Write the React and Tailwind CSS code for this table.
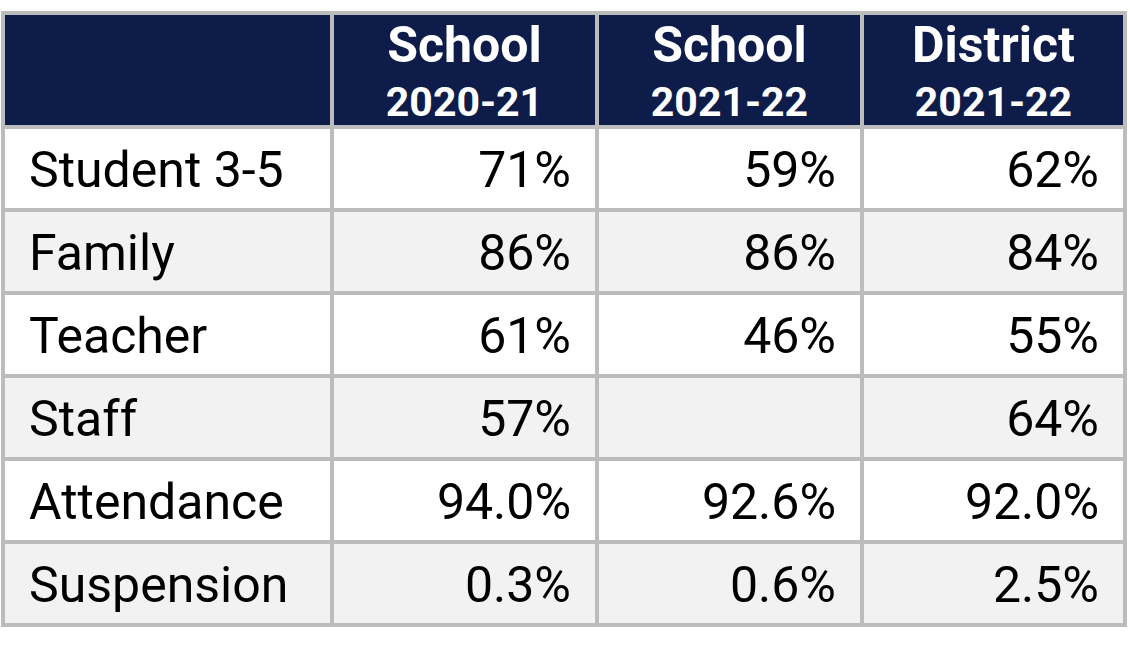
import React from "react";

const rows = [
  ["Student 3-5", "71%", "59%", "62%"],
  ["Family", "86%", "86%", "84%"],
  ["Teacher", "61%", "46%", "55%"],
  ["Staff", "57%", "", "64%"],
  ["Attendance", "94.0%", "92.6%", "92.0%"],
  ["Suspension", "0.3%", "0.6%", "2.5%"],
];

const heads = [
  ["School", "2020-21"],
  ["School", "2021-22"],
  ["District", "2021-22"],
];

export default function App() {
  return (
    <div className="w-[1130px] h-[645px] bg-white pt-[11px] pl-[1px]" style={{ fontFamily: "Roboto, 'Liberation Sans', sans-serif" }}>
      <div className="inline-grid grid-cols-[325px_261px_261px_259px] grid-rows-[110px_79px_79px_79px_79px_79px_79px] gap-[4px] p-[4px] bg-[#bcbcbc]">
        <div className="bg-[#0e1c4a]" />
        {heads.map(([a, b], i) => (
          <div key={i} className="bg-[#0e1c4a] text-white font-bold flex flex-col items-center justify-center pt-[6px]">
            <div className="text-[50px] leading-[54px]">{a}</div>
            <div className="text-[41px] leading-[52px] mt-[4px]">{b}</div>
          </div>
        ))}
        {rows.map((r, ri) => (
          <React.Fragment key={ri}>
            {r.map((c, ci) => (
              <div
                key={ci}
                className={`${ri % 2 === 0 ? "bg-white" : "bg-[#f2f2f2]"} text-black text-[50px] leading-none flex items-center pt-[3px] ${ci === 0 ? "justify-start pl-[24px]" : "justify-end pr-[24px]"}`}
              >
                {c}
              </div>
            ))}
          </React.Fragment>
        ))}
      </div>
    </div>
  );
}
